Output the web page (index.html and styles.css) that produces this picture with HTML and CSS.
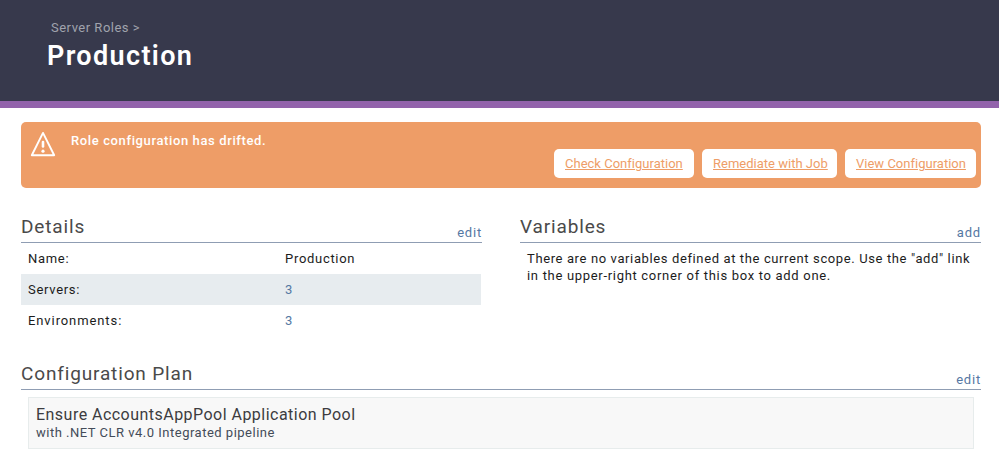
FILE: index.html
```html
<!DOCTYPE html>
<html lang="en">
<head>
<meta charset="utf-8">
<title>Production</title>
<link rel="stylesheet" href="styles.css">
</head>
<body>
<header class="page-header">
  <div class="breadcrumb">Server Roles &gt;</div>
  <h1>Production</h1>
</header>
<main>
  <section class="alert">
    <svg class="alert-icon" width="26" height="26" viewBox="0 0 26 26" fill="none" stroke="#fff" stroke-linecap="round" stroke-linejoin="round">
      <path d="M13 1.9 24.2 24.2H1.8Z" stroke-width="1.9"/>
      <path d="M13 11v4.5" stroke-width="2.6"/>
      <circle cx="13" cy="20.2" r="1.6" fill="#fff" stroke="none"/>
    </svg>
    <p class="alert-text">Role configuration has drifted.</p>
    <nav class="alert-actions">
      <a class="check">Check Configuration</a>
      <a class="remediate">Remediate with Job</a>
      <a class="view">View Configuration</a>
    </nav>
  </section>
  <div class="columns">
    <section>
      <div class="section-head"><h2>Details</h2><a>edit</a></div>
      <dl class="details">
        <div><dt>Name:</dt><dd>Production</dd></div>
        <div><dt>Servers:</dt><dd><a>3</a></dd></div>
        <div><dt class="environments">Environments:</dt><dd><a>3</a></dd></div>
      </dl>
    </section>
    <section>
      <div class="section-head"><h2>Variables</h2><a>add</a></div>
      <p class="empty">There are no variables defined at the current scope. Use the "add" link<br><span class="empty-end">in the upper-right corner of this box to add one.</span></p>
    </section>
  </div>
  <section class="plan">
    <div class="section-head"><h2>Configuration Plan</h2><a>edit</a></div>
    <article class="plan-item">
      <h3>Ensure AccountsAppPool Application Pool</h3>
      <p>with .NET CLR v4.0 Integrated pipeline</p>
    </article>
  </section>
</main>
</body>
</html>
```
FILE: styles.css
```css
* { box-sizing: border-box; }
body, h1, h2, h3, p, dl, dt, dd { margin: 0; }
body {
  background: #fff;
  color: #1c1c1c;
  font: 13px/17px Roboto, "Liberation Sans", sans-serif;
  letter-spacing: 0.5px;
}
.page-header {
  height: 108px;
  padding: 19px 0 0 46px;
  background: #37394c;
  border-bottom: 7px solid #9263ab;
}
.breadcrumb { padding-left: 5px; color: #a0a3ad; }
h1 {
  padding-left: 1px;
  color: #fff;
  font-size: 27px;
  line-height: 40px;
  font-weight: 600;
  letter-spacing: 1.35px;
}
main { padding: 14px 18px 0 21px; }
.alert {
  display: flex;
  height: 66px;
  padding: 0 5px 0 9px;
  background: #ee9d67;
  border-radius: 5px;
}
.alert-icon { flex: none; margin-top: 9px; }
.alert-text {
  margin: 10px 0 0 15px;
  color: #fff;
  font-weight: 500;
  letter-spacing: 0.62px;
  white-space: nowrap;
}
.alert-actions { display: flex; gap: 8px; margin: 27px 0 0 auto; }
.alert-actions a {
  height: 29px;
  padding: 6px 0 0 11px;
  border-radius: 5px;
  background: #fff;
  color: #ee9d67;
  letter-spacing: 0.01px;
  text-decoration: underline;
  white-space: nowrap;
}
.check { width: 140px; }
.remediate { width: 135px; }
.view { width: 131px; }
.columns { display: grid; grid-template-columns: 461px 461px; gap: 38px; margin-top: 24px; }
.section-head {
  display: flex;
  justify-content: space-between;
  height: 31px;
  border-bottom: 1px solid #8f9db3;
}
.section-head h2 {
  color: #4a4a4a;
  font-size: 19px;
  line-height: 30px;
  font-weight: 400;
  letter-spacing: 0.85px;
}
.section-head a { padding-top: 12px; letter-spacing: 0.8px; }
a { color: #5578a3; }
.details { margin-right: 1px; }
.details div { display: flex; height: 31px; padding: 7px 7px 0; letter-spacing: 0.7px; }
.details div:nth-child(even) { background: #e7ecef; }
.details dt { width: 257px; }
.details .environments { letter-spacing: 0.9px; }
.empty { padding: 7px 0 0 7px; letter-spacing: 0.62px; white-space: nowrap; }
.empty-end { letter-spacing: 0.69px; }
.plan { margin-top: 23px; }
.plan-item {
  height: 52px;
  margin: 7px 7px 0;
  padding: 7px 7px 0;
  border: 1px solid #e7ecec;
  background: #f8f8f8;
}
.plan-item h3 {
  color: #3c3c40;
  font-size: 16px;
  line-height: 19px;
  font-weight: 400;
  letter-spacing: 0.47px;
}
.plan-item p { color: #444c59; }
```
